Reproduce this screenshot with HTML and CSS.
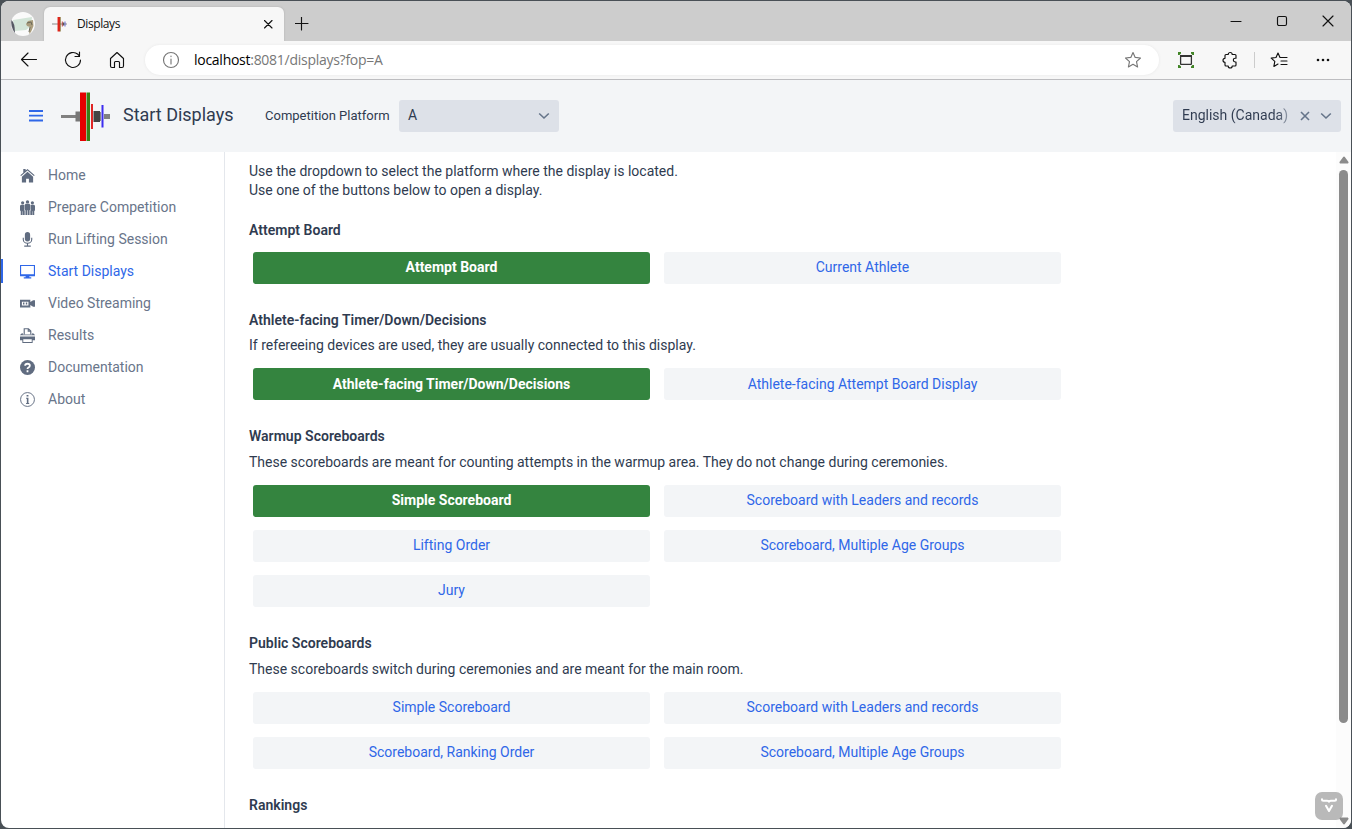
FILE: index.html
```html
<!DOCTYPE html>
<html lang="en">
<head>
<meta charset="utf-8">
<title>Displays</title>
<link rel="stylesheet" href="styles.css">
</head>
<body>
<div class="window">
  <div class="titlebar">
    <svg class="avatar" width="24" height="24" viewBox="0 0 24 24"><circle cx="12" cy="12" r="12" fill="#fafafa"/><path d="M2 8L21 5L20 14L15 18L4 19Z" fill="#d3e5d8"/><path d="M.5 8Q4 11 4 21L2 18Q-.5 13 .5 8Z" fill="#555963"/><path d="M15 12L17 9L22 8L22.500 14L20 20L18 22L19 15L16 14Z" fill="#aa9d7d"/><path d="M16 11l4-1 1 3M19 15l-1 5" stroke="#6b6a5a" fill="none"/></svg>
    <div class="tab">
      <svg class="favicon" width="16" height="16" viewBox="0 0 16 16"><path d="M0 8h15" stroke="#888" stroke-width="1"/><path d="M6.800 1v14.500" stroke="#e2231a" stroke-width="2.500"/><path d="M8.300 1v14.500" stroke="#7d6a2a" stroke-width=".8"/><path d="M10.300 5.500v5" stroke="#c44"/><path d="M11.500 6.500v3" stroke="#555" stroke-width="1.500"/><path d="M13 5.500v5" stroke="#66c"/></svg>
      <span class="tab-title">Displays</span>
      <svg width="10" height="10" viewBox="0 0 10 10" class="line"><path d="M1.500 1.500l7.500 7.500M9 1.500L1.500 9"/></svg>
    </div>
    <svg class="line newtab" width="14" height="14" viewBox="0 0 14 14"><path d="M6.500 0v13M0 6.500h13"/></svg>
    <div class="controls">
      <svg class="line" width="12" height="12" viewBox="0 0 12 12"><path d="M1 6.500h10"/></svg>
      <svg class="line" width="12" height="12" viewBox="0 0 12 12"><rect x="1.500" y="1.500" width="9" height="9" rx="1.500"/></svg>
      <svg class="line" width="12" height="12" viewBox="0 0 12 12"><path d="M1 1l10 10M11 1L1 11"/></svg>
    </div>
  </div>
  <div class="toolbar">
    <svg class="line nav-icon" width="18" height="18" viewBox="0 0 18 18"><path d="M16.500 8.500H1.500M8 2L1.500 8.500 8 15"/></svg>
    <svg class="line nav-icon" width="18" height="18" viewBox="0 0 18 18"><path d="M16.500 9a7.500 7.500 0 1 1-2.600-5.700L15.500 5M15.500 1v4.500H11"/></svg>
    <svg class="line nav-icon" width="18" height="18" viewBox="0 0 18 18"><path d="M2.500 7.500L9 1.500l6.500 6V15q0 1.500-1.500 1.500h-2.500v-5q0-1-1-1h-3q-1 0-1 1v5H4Q2.500 16.500 2.500 15Z"/></svg>
    <div class="address">
      <svg class="line gray" width="18" height="18" viewBox="0 0 18 18"><circle cx="9" cy="9" r="7.500"/><path d="M9 8v5M9 5v.6"/></svg>
      <span class="url"><b>localhost</b>:8081/displays?fop=A</span>
      <svg class="line gray star" width="18" height="18" viewBox="0 0 18 18"><path d="M9 1.500l2.200 4.900 5.300.6-4 3.600 1.100 5.400L9 13.300 4.400 16l1.100-5.400-4-3.600 5.300-.6Z"/></svg>
    </div>
    <svg class="capture" width="16" height="16" viewBox="0 0 16 16"><path d="M0 0h3v1.500L1.500 3H0zM13 0h3v3h-1.500L13 1.500zM16 13v3h-3v-1.500l1.500-1.500zM0 13h1.500L3 14.500V16H0z" fill="#418426"/><rect x="2.600" y="3.600" width="10.800" height="8.800" rx=".5" fill="#f7f7f7" stroke="#333" stroke-width="1.300"/><path d="M2 4h12" stroke="#333" stroke-width="2"/></svg>
    <svg class="line puzzle" width="18" height="18" viewBox="0 0 18 18"><path d="M5 3.500h2.200a2 2 0 0 1 4 0H14q1 0 1 1v2.700h-.8a1.900 1.900 0 0 0 0 3.800h.8v3q0 1-1 1h-2.800a2 2 0 0 1-4 0H5q-1 0-1-1v-2.700a2 2 0 0 1 0-4V4.500q0-1 1-1Z"/></svg>
    <i class="divider"></i>
    <svg class="line" width="18" height="18" viewBox="0 0 18 18"><path d="M12 6.500h-2L8 2 6 6.500l-4.800.6 3.600 3.300-.9 5L8 13M11 6.500h6M11 10h6M11 13.500h6"/></svg>
    <svg class="more" width="14" height="4" viewBox="0 0 14 4"><circle cx="2" cy="2" r="1.300"/><circle cx="7" cy="2" r="1.300"/><circle cx="12" cy="2" r="1.300"/></svg>
  </div>
  <header class="app-header">
    <svg class="menu-toggle" width="14" height="12" viewBox="0 0 14 12"><path d="M0 1h14M0 5.700h14M0 10.500h14"/></svg>
    <svg class="logo" width="50" height="50" viewBox="0 0 50 50"><path d="M0 23h15v3H0zM43 22h6v5h-6z" fill="#808080"/><path d="M14.500 19.500h5v10h-5z" fill="#777"/><path d="M19 .5h6v48.500h-6z" fill="#e60000"/><path d="M25.500.5h3.500v48.500h-3.500z" fill="#388016"/><path d="M30 12h2v25h-2z" fill="#e02525"/><path d="M32.500 19h6.500v11h-6.500z" fill="#444"/><path d="M39 20h1v9h-1z" fill="#888"/><path d="M40.500 13h2v22.500h-2z" fill="#3c2df0"/></svg>
    <h1>Start Displays</h1>
    <span class="platform-label">Competition Platform</span>
    <div class="select platform"><span>A</span><svg width="12" height="8" viewBox="0 0 12 8"><path d="M1.200 1.500L6 6l4.800-4.500"/></svg></div>
    <div class="select language"><span>English (Canada)</span><svg width="10" height="10" viewBox="0 0 10 10"><path d="M1 1l8 8M9 1L1 9"/></svg><svg width="12" height="8" viewBox="0 0 12 8"><path d="M1.200 1.500L6 6l4.800-4.500"/></svg></div>
  </header>
  <div class="body">
    <nav class="sidebar">
      <a><svg width="16" height="16" viewBox="0 0 16 16"><path d="M8 1L6 2.700V1H3.500v4L.3 7.700l.9.900L8 2.700l6.800 5.900.9-.9zM8 4L2 9.200v6.300h4.500v-4h3v4H14V9.200z"/></svg>Home</a>
      <a><svg width="16" height="16" viewBox="0 0 16 16"><circle cx="8" cy="2" r="1.800"/><circle cx="2.800" cy="3" r="1.700"/><circle cx="13.200" cy="3" r="1.700"/><path d="M6 4h4l1 1.200V10l-.8 1v5H8.300v-5h-.6v5H5.800v-5L5 10V5.200zM1 5h3.500v6l.5.300V16H3v-4h-.4v4H.8v-4L0 11V6zM11.500 5H15l1 1v5l-.8 1v4h-1.800v-4H13v4h-2v-4.700l.5-.3z"/></svg>Prepare Competition</a>
      <a><svg width="16" height="16" viewBox="0 0 16 16"><rect x="5.200" y="0" width="5.600" height="10" rx="2.800"/><path d="M3.500 6v2A4.500 4 0 0 0 12.500 8V6M8 12v3M4.500 15h7" fill="none" stroke="currentColor" stroke-width="1.200"/></svg>Run Lifting Session</a>
      <a class="active"><svg width="16" height="16" viewBox="0 0 16 16"><path d="M0 1h16v12h-6v1h2v1.500H4V14h2v-1H0zM1.200 2.200v8.600h13.600V2.200z" fill-rule="evenodd"/></svg>Start Displays</a>
      <a><svg width="16" height="16" viewBox="0 0 16 16"><path d="M0 4h11v2.500L14 4.500h2v7h-2l-3-2V12H0zM2 6v4h7V6z" fill-rule="evenodd"/><path d="M3.200 7h1.500v2H3.200zM6.200 7h1.500v2H6.200z"/><path d="M0 12.200h11" stroke="#aab2bd"/></svg>Video Streaming</a>
      <a><svg width="16" height="16" viewBox="0 0 16 16"><path d="M4.500 7V.8H9l2.500 2.500V7M8.800 1v2.500H11.500" fill="none" stroke="currentColor" stroke-width="1.200"/><path d="M2 5.500h1V7h10V5.500h1l2 2H0z"/><path d="M0 8h16v1.700H0z" opacity=".5"/><path d="M0 9.700h16V13h-2.500v3h-11v-3H0zM3.500 12v2.800h9V12z" fill-rule="evenodd"/></svg>Results</a>
      <a><svg width="16" height="16" viewBox="0 0 16 16"><circle cx="8" cy="8" r="8"/><path d="M5.500 6Q5.500 4 8 4t2.500 2Q10.500 7.200 9 8q-1 .5-1 1.500M8 11v2" fill="none" stroke="#fff" stroke-width="1.900"/></svg>Documentation</a>
      <a><svg width="16" height="16" viewBox="0 0 16 16"><circle cx="8" cy="8" r="7.400" fill="none" stroke="currentColor"/><path d="M7 3.200h2v1.700H7zM6.500 6.200H9v5.500h.8v1H6.500v-1h.8V7.200h-.8z"/></svg>About</a>
    </nav>
    <main class="content">
      <p class="intro">Use the dropdown to select the platform where the display is located.<br>Use one of the buttons below to open a display.</p>
      <section><h2>Attempt Board</h2>
        <div class="grid first"><button class="primary">Attempt Board</button><button>Current Athlete</button></div></section>
      <section><h2>Athlete-facing Timer/Down/Decisions</h2><p class="desc tight">If refereeing devices are used, they are usually connected to this display.</p>
        <div class="grid low"><button class="primary">Athlete-facing Timer/Down/Decisions</button><button>Athlete-facing Attempt Board Display</button></div></section>
      <section><h2>Warmup Scoreboards</h2><p class="desc">These scoreboards are meant for counting attempts in the warmup area. They do not change during ceremonies.</p>
        <div class="grid"><button class="primary">Simple Scoreboard</button><button>Scoreboard with Leaders and records</button><button>Lifting Order</button><button>Scoreboard, Multiple Age Groups</button><button>Jury</button></div></section>
      <section><h2>Public Scoreboards</h2><p class="desc">These scoreboards switch during ceremonies and are meant for the main room.</p>
        <div class="grid"><button>Simple Scoreboard</button><button>Scoreboard with Leaders and records</button><button>Scoreboard, Ranking Order</button><button>Scoreboard, Multiple Age Groups</button></div></section>
      <section><h2>Rankings</h2></section>
    </main>
    <div class="scrollbar"><svg width="10" height="8" viewBox="0 0 10 8"><path d="M5 .5Q5.500.5 6 1.200L9.500 6q.3 1-.7 1.500H1.200Q.2 7 .5 6L4 1.200Q4.500.5 5 .5Z"/></svg><i class="thumb"></i><svg class="down" width="10" height="8" viewBox="0 0 10 8"><path d="M5 7.500Q5.500 7.500 6 6.800L9.500 2q.3-1-.7-1.500H1.200Q.2 1 .5 2L4 6.800Q4.500 7.500 5 7.500Z"/></svg></div>
  </div>
  <svg class="devtools" width="28" height="28" viewBox="0 0 28 28"><rect width="28" height="28" rx="7" fill="#b9b9b9"/><path d="M7 7.200v.6q0 1 1.200 1H12q2 0 2 1 0-1 2-1h3.800q1.200 0 1.200-1v-.6M11 13.800l3 5.200 3-5.200" fill="none" stroke="#fff" stroke-width="2.100" stroke-linecap="round" stroke-linejoin="round"/></svg>
</div>
</body>
</html>
```
FILE: styles.css
```css
* { box-sizing: border-box; }
body { margin: 0; background: #495056; font-family: Roboto, sans-serif; font-size: 14px; color: #2f3b50; }
svg { display: block; flex: none; }
.window { position: relative; display: flex; flex-direction: column; width: 1350px; height: 827px; margin: 1px; overflow: hidden; border-radius: 8px; background: #fff; }
.line { fill: none; stroke: #111; stroke-width: 1.15; stroke-linecap: round; stroke-linejoin: round; }
.line.gray { stroke: #777; }
.titlebar { display: flex; flex: none; height: 40px; background: #cdcdcd; padding-left: 10px; font-family: "Open Sans", sans-serif; }
.avatar { margin-top: 11px; }
.tab { display: flex; align-items: center; width: 240px; height: 34px; margin: 6px 0 0 9px; padding: 0 11px 0 8px; border-radius: 6px 6px 0 0; background: #f7f7f7; box-shadow: 0 0 2px #aaa; }
.tab-title { flex: 1; margin-left: 9px; padding-bottom: 2px; font-size: 12px; color: #111; letter-spacing: -.4px; }
.newtab { margin: 16px 0 0 11px; }
.controls { display: flex; gap: 34px; margin: 14px 17px 0 auto; }
.toolbar { display: flex; align-items: center; flex: none; height: 39px; padding: 0 21px 0 19px; background: #f7f7f7; border-bottom: 1px solid #bdbdc0; }
.nav-icon { margin-right: 26px; }
.address { display: flex; align-items: center; width: 1014px; height: 30px; margin-left: -7px; padding: 0 17px; border-radius: 15px; background: #fff; box-shadow: 0 0 3px #e7e7e7; font-family: "Open Sans", sans-serif; font-size: 14px; color: #777; }
.url { margin-left: 14px; padding-bottom: 2px; letter-spacing: -.27px; }
.url b { font-weight: 400; color: #000; }
.star { margin-left: auto; }
.capture { margin-left: 19px; }
.puzzle { margin-left: 27px; }
.divider { width: 1px; height: 16px; margin: 0 15px; background: #ccc; }
.more { margin-left: auto; fill: #111; }
.app-header { display: flex; align-items: center; flex: none; height: 72px; padding: 0 10px 0 28px; background: #f3f5f7; }
.menu-toggle { stroke: #2f67e8; stroke-width: 1.8; }
.logo { margin-left: 18px; margin-top: 1px; }
h1 { width: 142px; margin: 0 0 2px 12px; font-size: 18px; line-height: 24px; font-weight: 400; letter-spacing: -.02px; }
.platform-label { width: 134px; padding-bottom: 2px; font-size: 13px; }
.select { display: flex; align-items: center; justify-content: space-between; height: 32px; padding: 0 9px; border-radius: 3px; background: #dde1e8; }
.select svg { fill: none; stroke: #66758a; stroke-width: 1.6; }
.select span { padding-bottom: 2px; }
.platform { width: 160px; }
.language { width: 168px; margin-left: auto; }
.language span { width: 108px; background: linear-gradient(90deg, #2f3b50 88%, #a5aebb); background-clip: text; color: transparent; white-space: nowrap; }
.body { display: flex; flex: 1; min-height: 0; }
.sidebar { flex: none; width: 224px; padding-top: 7px; border-right: 1px solid #e4e7ec; }
.sidebar a { display: flex; align-items: center; gap: 13px; height: 32px; padding-left: 19px; color: #69758a; }
.sidebar svg { width: 15px; height: 15px; fill: currentColor; color: #606c80; }
.sidebar a.active { height: 24px; margin: 4px 0; padding-left: 17px; border-left: 2px solid #2f67e8; color: #2f67e8; }
.sidebar .active svg { color: #2f67e8; }
.content { flex: 1; min-width: 0; overflow: hidden; padding: 10px 0 0 24px; }
p { margin: 0; }
.intro { line-height: 19px; margin-bottom: 20px; }
section { margin-bottom: 26px; }
h2 { margin: 0; font-size: 14px; line-height: 20px; font-weight: 600; letter-spacing: .02px; }
.desc { margin-top: 6px; line-height: 20px; }
.desc.tight { margin-top: 5px; }
.grid { display: grid; grid-template-columns: 397px 397px; gap: 13px 14px; margin: 13px 0 0 4px; }
.grid.first { margin-top: 12px; }
button { height: 32px; padding: 0 0 2px; border: 0; border-radius: 3px; background: #f3f5f7; color: #2f67e8; font: 14px Roboto, sans-serif; }
.low button { padding-bottom: 0; }
button.primary { background: #34843f; color: #fff; font-weight: 700; }
.scrollbar { display: flex; flex-direction: column; align-items: center; width: 15px; padding: 4px 0 3px; background: #fcfcfc; fill: #8b8b8b; }
.thumb { width: 9px; height: 553px; margin-top: 6px; border-radius: 5px; background: #8b8b8b; }
.down { position: relative; z-index: 2; margin-top: auto; }
.devtools { position: absolute; left: 1314px; top: 791px; }
```
